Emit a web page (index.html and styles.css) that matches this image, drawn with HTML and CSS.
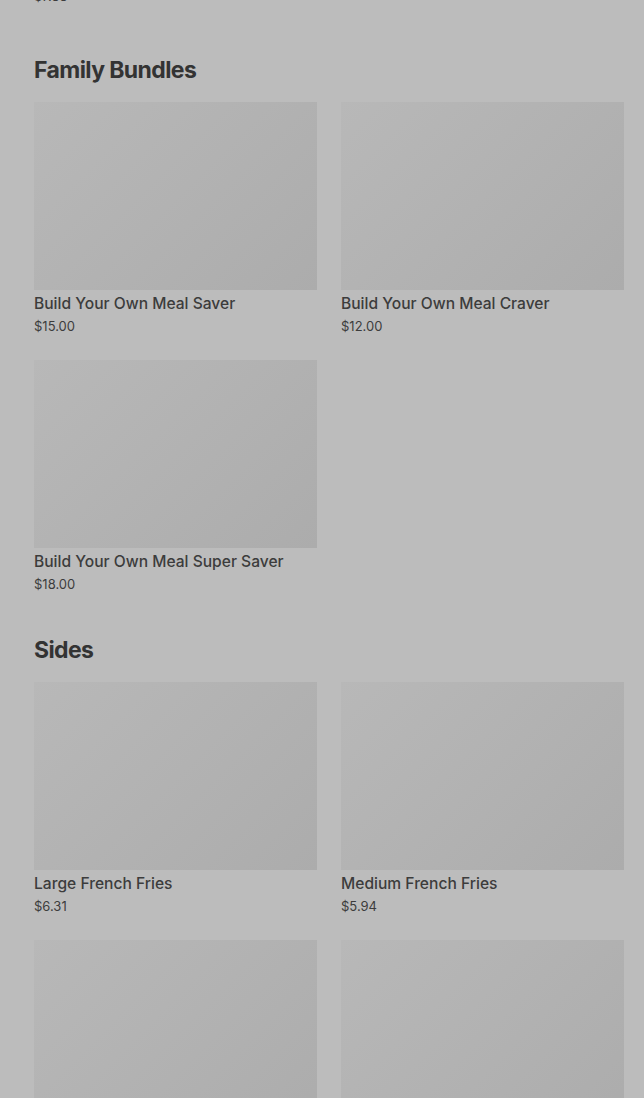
FILE: index.html
```html
<!DOCTYPE html>
<html lang="en">
  <head>
    <meta charset="UTF-8" />
    <meta name="viewport" content="width=device-width, initial-scale=1.0" />
    <title>Menu</title>
    <link rel="stylesheet" href="styles.css">
  </head>
  <body>
    <div class="menu">
      <div class="menu-tail">
        <span class="price">$7.88</span>
      </div>

      <section class="category category-first">
        <h2 class="category-title">Family Bundles</h2>
        <div class="item-grid">
          <div class="item">
            <div class="item-image"></div>
            <div class="item-name">Build Your Own Meal Saver</div>
            <div class="price">$15.00</div>
          </div>
          <div class="item">
            <div class="item-image"></div>
            <div class="item-name">Build Your Own Meal Craver</div>
            <div class="price">$12.00</div>
          </div>
          <div class="item">
            <div class="item-image"></div>
            <div class="item-name">Build Your Own Meal Super Saver</div>
            <div class="price">$18.00</div>
          </div>
        </div>
      </section>

      <section class="category">
        <h2 class="category-title">Sides</h2>
        <div class="item-grid">
          <div class="item">
            <div class="item-image"></div>
            <div class="item-name">Large French Fries</div>
            <div class="price">$6.31</div>
          </div>
          <div class="item">
            <div class="item-image"></div>
            <div class="item-name">Medium French Fries</div>
            <div class="price">$5.94</div>
          </div>
          <!-- next row starts below the fold -->
          <div class="item">
            <div class="item-image"></div>
          </div>
          <div class="item">
            <div class="item-image"></div>
          </div>
        </div>
      </section>
    </div>
  </body>
</html>
```

FILE: styles.css
```css
*,
*::before,
*::after {
  box-sizing: border-box;
}

:root {
  --page-bg: #bcbcbc;
  --text: #333333;
  --text-soft: #3c3c3c;
  --image-light: #b8b8b8;
  --image-dark: #acacac;
}

body {
  margin: 0;
  font-family: Inter, "Liberation Sans", Arial, sans-serif;
  background: var(--page-bg);
  color: var(--text);
  overflow: hidden;
  height: 1098px;
}

.menu {
  padding: 0 20px 0 34px;
}

.menu-tail {
  margin-top: -15px;
  height: 20px;
}

.category {
  margin-top: 40px;
}

.category-first {
  margin-top: 48px;
}

.category-title {
  margin: 0 0 16px;
  font-size: 23px;
  line-height: 32px;
  font-weight: 700;
  letter-spacing: -0.6px;
  color: var(--text);
}

.item-grid {
  display: grid;
  grid-template-columns: 283px 283px;
  column-gap: 24px;
  row-gap: 24px;
}

.item-image {
  height: 188px;
  background: linear-gradient(135deg, var(--image-light) 0%, #b2b2b2 50%, var(--image-dark) 100%);
}

.item-name {
  margin-top: 3px;
  font-size: 15.6px;
  line-height: 22px;
  font-weight: 500;
  color: var(--text-soft);
}

.price {
  display: block;
  margin-top: 1px;
  font-size: 13px;
  line-height: 20px;
  color: var(--text-soft);
}
```
